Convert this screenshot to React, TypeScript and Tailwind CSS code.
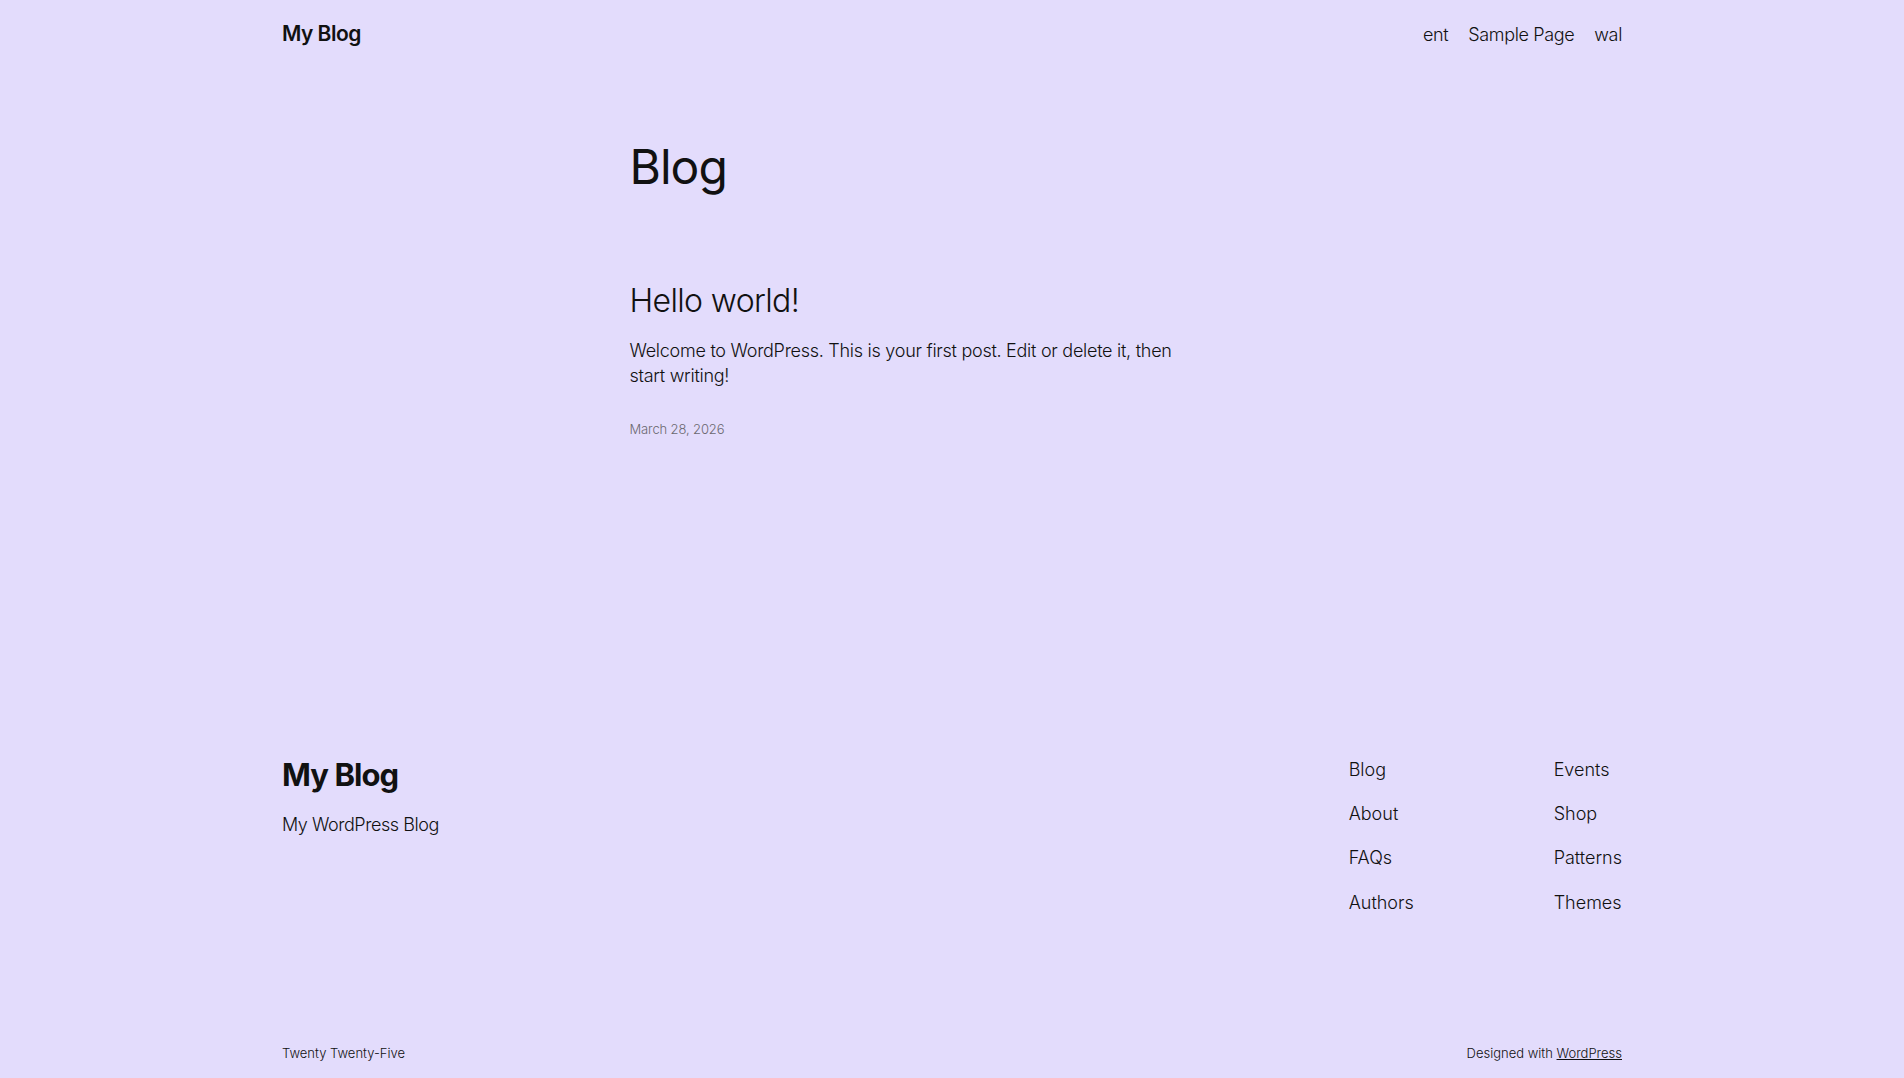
export default function App() {
    const footerLinks = [
        ['Blog', 'About', 'FAQs', 'Authors'],
        ['Events', 'Shop', 'Patterns', 'Themes'],
    ]

    return (
        <div className="min-h-screen bg-[#e3dcfc] text-[#111111] font-['Inter','Noto_Sans',sans-serif]">
            <header className="w-[1340px] mx-auto h-[68px] flex items-center justify-between">
                <a href="#" className="text-[21px] font-semibold tracking-[-0.025em]">My Blog</a>
                <nav className="flex gap-5 text-[18px] font-light tracking-[-0.02em]">
                    <a href="#">ent</a>
                    <a href="#">Sample Page</a>
                    <a href="#">wal</a>
                </nav>
            </header>

            <main className="w-[645px] mx-auto">
                <h1 className="mt-[70px] text-[48px] leading-[1.2] tracking-[-0.02em]">Blog</h1>
                <article className="mt-[86px]">
                    <h2 className="text-[32px] leading-[1.2] font-light tracking-[-0.02em]">
                        <a href="#">Hello world!</a>
                    </h2>
                    <p className="mt-[18px] text-[18px] leading-[25px] font-light tracking-[-0.015em]">
                        Welcome to WordPress. This is your first post. Edit or delete it, then<br/>start writing!
                    </p>
                    <p className="mt-[31px] text-[13px] leading-[20px] font-light tracking-[-0.01em] text-[#6b6870]">March 28, 2026</p>
                </article>
            </main>

            <footer className="w-[1340px] mx-auto">
                <div className="mt-[318px] flex justify-between">
                    <div>
                        <h2 className="-mt-[1px] text-[31px] leading-[1.2] font-bold tracking-[-0.03em]">My Blog</h2>
                        <p className="mt-[19px] text-[18px] leading-[25px] font-light tracking-[-0.025em]">My WordPress Blog</p>
                    </div>
                    <div className="flex">
                        {footerLinks.map((col, i) => (
                            <ul key={i} className={i === 0 ? 'w-[205px] flex flex-col gap-[19.2px]' : 'flex flex-col gap-[19.2px]'}>
                                {col.map(link => (
                                    <li key={link} className="text-[18px] leading-[25px] font-light">
                                        <a href="#">{link}</a>
                                    </li>
                                ))}
                            </ul>
                        ))}
                    </div>
                </div>
                <div className="mt-[128px] pb-[15px] flex justify-between text-[13px] leading-[20px] font-light">
                    <p>Twenty Twenty-Five</p>
                    <p>Designed with <a href="#" className="underline">WordPress</a></p>
                </div>
            </footer>
        </div>
    )
}
